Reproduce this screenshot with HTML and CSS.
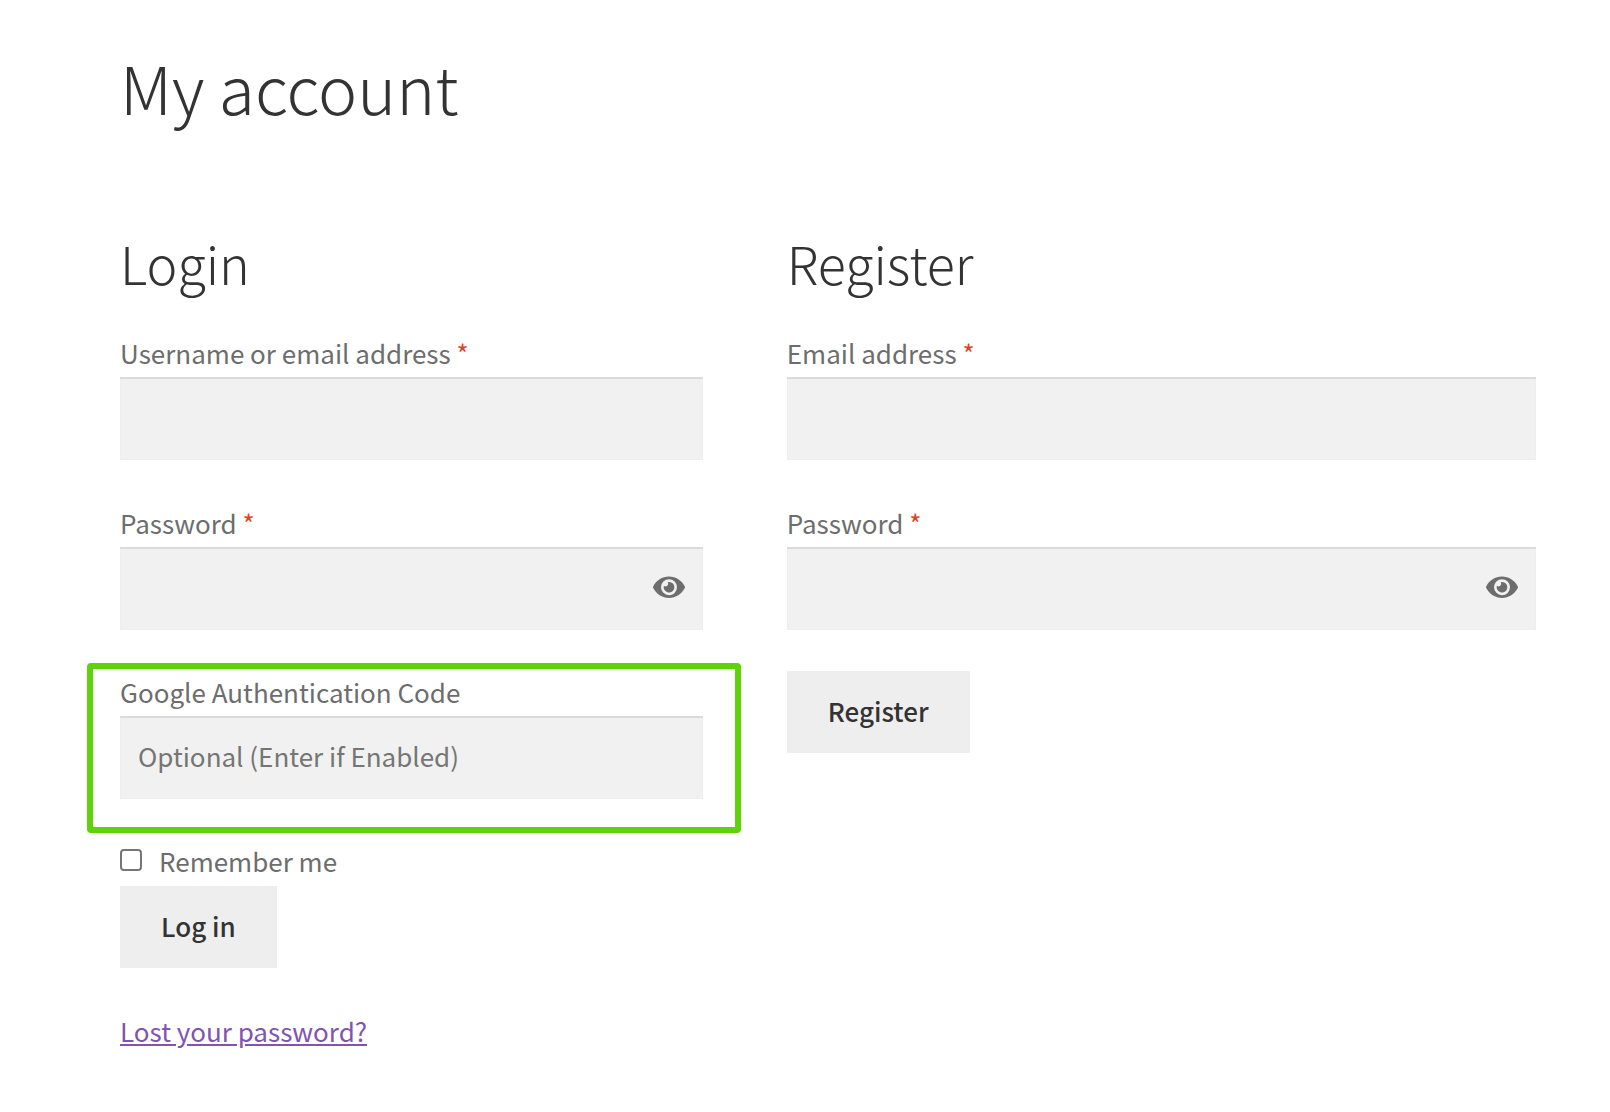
FILE: index.html
```html
<!DOCTYPE html>
<html lang="en">

<head>
    <meta charset="UTF-8">
    <title>My account</title>
    <link rel="stylesheet" href="styles.css">
</head>

<body>
    <main class="account">
        <h1>My account</h1>

        <div class="columns">
            <section>
                <h2>Login</h2>
                <form>
                    <div class="field">
                        <label for="username">Username or email address <span class="required">*</span></label>
                        <input type="text" id="username" name="username">
                    </div>

                    <div class="field">
                        <label for="password">Password <span class="required">*</span></label>
                        <div class="password-input">
                            <input type="password" id="password" name="password">
                            <button type="button" class="show-password" aria-label="Show password">
                                <svg viewBox="0 0 576 512"><path d="M572.52 241.4C518.29 135.59 410.93 64 288 64S57.68 135.64 3.48 241.41a32.35 32.35 0 0 0 0 29.19C57.71 376.41 165.07 448 288 448s230.32-71.64 284.52-177.41a32.35 32.35 0 0 0 0-29.19zM288 400a144 144 0 1 1 144-144 143.93 143.93 0 0 1-144 144zm0-240a95.31 95.31 0 0 0-25.31 3.79 47.85 47.85 0 0 1-66.9 66.9A95.78 95.78 0 1 0 288 160z"/></svg>
                            </button>
                        </div>
                    </div>

                    <div class="field highlight">
                        <label for="authcode">Google Authentication Code</label>
                        <input type="text" id="authcode" name="authcode" placeholder="Optional (Enter if Enabled)">
                    </div>

                    <label class="remember">
                        <input type="checkbox" name="rememberme">
                        <span>Remember me</span>
                    </label>
                    <button type="submit" class="button">Log in</button>

                    <p class="lost-password"><a href="#">Lost your password?</a></p>
                </form>
            </section>

            <section>
                <h2>Register</h2>
                <form>
                    <div class="field">
                        <label for="reg-email">Email address <span class="required">*</span></label>
                        <input type="email" id="reg-email" name="email">
                    </div>

                    <div class="field">
                        <label for="reg-password">Password <span class="required">*</span></label>
                        <div class="password-input">
                            <input type="password" id="reg-password" name="password">
                            <button type="button" class="show-password" aria-label="Show password">
                                <svg viewBox="0 0 576 512"><path d="M572.52 241.4C518.29 135.59 410.93 64 288 64S57.68 135.64 3.48 241.41a32.35 32.35 0 0 0 0 29.19C57.71 376.41 165.07 448 288 448s230.32-71.64 284.52-177.41a32.35 32.35 0 0 0 0-29.19zM288 400a144 144 0 1 1 144-144 143.93 143.93 0 0 1-144 144zm0-240a95.31 95.31 0 0 0-25.31 3.79 47.85 47.85 0 0 1-66.9 66.9A95.78 95.78 0 1 0 288 160z"/></svg>
                            </button>
                        </div>
                    </div>

                    <button type="submit" class="button">Register</button>
                </form>
            </section>
        </div>
    </main>
</body>

</html>
```

FILE: styles.css
```css
* {
    box-sizing: border-box;
}

body {
    margin: 0;
    background-color: #fff;
    color: #6d6d6d;
    font-family: "Source Sans Pro", "Noto Sans CJK SC", sans-serif;
    font-size: 26px;
    line-height: 44px;
}

.account {
    padding: 46px 74px 40px 120px;
}

h1,
h2 {
    margin: 0;
    color: #333;
    font-weight: 300;
}

h1 {
    margin-bottom: 107px;
    font-size: 66px;
    line-height: 80px;
}

h2 {
    margin-bottom: 38px;
    font-size: 52px;
    line-height: 60px;
}

.columns {
    display: grid;
    grid-template-columns: 7fr 9fr;
    gap: 84px;
}

.field {
    margin-bottom: 41px;
}

.field label {
    display: block;
    margin-bottom: 2px;
}

.required {
    color: #e2401c;
}

input,
button {
    font: inherit;
    color: inherit;
}

.field input {
    display: block;
    width: 100%;
    height: 83px;
    padding: 0 18px 4px;
    border: 0;
    background-color: #f1f1f1;
    box-shadow: inset 0 2px 0 #dadada, inset 0 0 0 1px #eee;
}

.field input::placeholder {
    color: #757575;
    opacity: 1;
}

.password-input {
    position: relative;
}

.show-password {
    position: absolute;
    top: 0;
    right: 18px;
    height: 100%;
    padding: 0 0 2px;
    border: 0;
    background: none;
    cursor: pointer;
}

.show-password svg {
    display: block;
    width: 32px;
    fill: #6d6d6d;
}

/* frame reaches past the column on both sides */
.highlight {
    margin: -8px -38px 6px -33px;
    padding: 1px 32px 28px 27px;
    border: 6px solid #5fd30a;
    border-radius: 4px;
}

.remember {
    display: flex;
    align-items: center;
    gap: 17px;
    margin-bottom: 3px;
}

.remember input {
    appearance: none;
    width: 22px;
    height: 22px;
    margin: 0 0 2px;
    border: 2px solid #767676;
    border-radius: 4px;
    background-color: #fff;
}

.remember input:checked {
    background-color: #7f54b3;
}

.button {
    display: block;
    height: 82px;
    padding: 0 41px 2px;
    border: 0;
    background-color: #eee;
    color: #333;
    font-weight: 500;
    cursor: pointer;
}

.lost-password {
    margin: 41px 0 0;
}

.lost-password a {
    color: #7f54b3;
}
```
